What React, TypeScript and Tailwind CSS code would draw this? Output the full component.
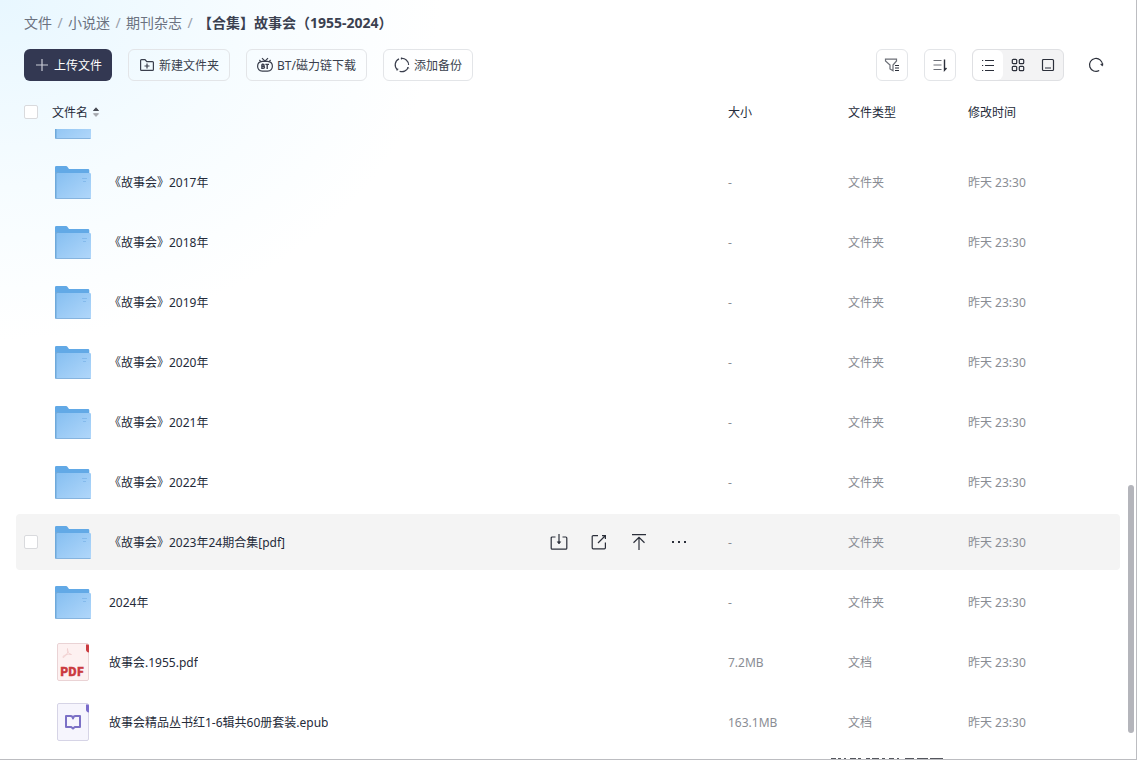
import type { ReactNode } from 'react';

type FileKind = 'folder' | 'pdf' | 'epub';

interface FileItem {
  name: string;
  kind: FileKind;
  size: string;
  type: string;
  time: string;
  active?: boolean;
}

const folder = (name: string, active = false): FileItem => ({
  name,
  kind: 'folder',
  size: '-',
  type: '文件夹',
  time: '昨天 23:30',
  active,
});

const files: FileItem[] = [
  folder('《故事会》2017年'),
  folder('《故事会》2018年'),
  folder('《故事会》2019年'),
  folder('《故事会》2020年'),
  folder('《故事会》2021年'),
  folder('《故事会》2022年'),
  folder('《故事会》2023年24期合集[pdf]', true),
  folder('2024年'),
  { name: '故事会.1955.pdf', kind: 'pdf', size: '7.2MB', type: '文档', time: '昨天 23:30' },
  {
    name: '故事会精品丛书红1-6辑共60册套装.epub',
    kind: 'epub',
    size: '163.1MB',
    type: '文档',
    time: '昨天 23:30',
  },
];

const rowGrid = 'grid grid-cols-[minmax(0,1fr)_120px_120px_152px] items-center';

function Icon({ children, size = 16 }: { children: ReactNode; size?: number }) {
  return (
    <svg
      width={size}
      height={size}
      viewBox={`0 0 ${size} ${size}`}
      fill="none"
      stroke="currentColor"
      strokeWidth="1.2"
      className="shrink-0"
      aria-hidden="true"
    >
      {children}
    </svg>
  );
}

function FolderIcon() {
  return (
    <svg width="36" height="34" viewBox="0 -1 36 34" className="shrink-0" aria-hidden="true">
      <defs>
        <linearGradient id="folderFront" x1="0" y1="0" x2="1" y2="1">
          <stop offset="0" stopColor="#86bff1" />
          <stop offset="1" stopColor="#b1d7fa" />
        </linearGradient>
      </defs>
      <path d="M0 1.2Q0 0 1.2 0H11Q12 0 12.6 1L14 3H33Q34.3 3 34.3 4.3V20H0Z" fill="#62a9e6" />
      <path d="M0 6H4V33H1.2Q0 33 0 32Z" fill="#6fa9da" />
      <path d="M1.5 8.2Q1.5 7 2.7 7H34.8Q36 7 36 8.2V31.8Q36 33 34.8 33H1.5Z" fill="url(#folderFront)" />
      <path d="M1 32.5H35.5" stroke="#86b4df" strokeWidth="1" />
      <path d="M27 12.5H32M28 15.5H31" stroke="#78b2e8" strokeWidth="0.7" />
    </svg>
  );
}

function PdfIcon() {
  return (
    <svg width="32" height="38" viewBox="0 0 32 38" aria-hidden="true">
      <rect x="0.5" y="0.5" width="31" height="37" rx="1.5" fill="#fdf1f1" stroke="#ead3d5" />
      <path d="M29 1.5H31Q32 1.5 32 2.5V9.5Q29 9 29 6.5Z" fill="#cb3b40" />
      <path
        d="M10.5 5.5Q12 9 9.5 11.5Q8 14 6 14.5Q5 13.5 8 12Q11 10.5 14.5 11.5Q13 11.5 11.3 9.5Q9.8 7.5 10.5 5.5Z"
        fill="none"
        stroke="#f1cfcf"
        strokeWidth="0.9"
      />
      <text
        x="15"
        y="33"
        textAnchor="middle"
        fontFamily="Noto Sans CJK SC, sans-serif"
        fontSize="12"
        fontWeight="900"
        fill="#cb3b40"
        stroke="#cb3b40"
        strokeWidth="0.3"
      >
        PDF
      </text>
    </svg>
  );
}

function EpubIcon() {
  return (
    <svg width="32" height="38" viewBox="0 0 32 38" fill="none" aria-hidden="true">
      <rect x="0.5" y="0.5" width="31" height="37" rx="1.5" fill="#f6f5fd" stroke="#d6d4e6" />
      <path d="M29 1.5H31Q32 1.5 32 2.5V9.5Q29 9 29 6.5Z" fill="#7a6ccb" />
      <path
        d="M9 13H13.5Q16 13 16 15.5Q16 13 18.5 13H23V24H17.8L16 25.6L14.2 24H9Z"
        stroke="#7b70c6"
        strokeWidth="2"
        strokeLinejoin="round"
      />
    </svg>
  );
}

const kindIcons: Record<FileKind, ReactNode> = {
  folder: <FolderIcon />,
  pdf: <PdfIcon />,
  epub: <EpubIcon />,
};

function Checkbox({ label }: { label: string }) {
  return (
    <input
      type="checkbox"
      aria-label={label}
      className="size-3.5 shrink-0 appearance-none rounded-xs border border-[#d9dadd] bg-white"
    />
  );
}

function ToolButton({ icon, children }: { icon: ReactNode; children: ReactNode }) {
  return (
    <button
      type="button"
      className="flex h-8 items-center gap-1 rounded-md border border-[#e3e5e8] px-2.5 text-[#3a3f4d]"
    >
      {icon}
      <span className="pt-0.5">{children}</span>
    </button>
  );
}

function Breadcrumb() {
  return (
    <nav aria-label="路径" className="flex h-5 items-center px-2 text-sm text-[#6b7280]">
      {['文件', '小说迷', '期刊杂志'].map((part) => (
        <span key={part} className="flex">
          <a href="#">{part}</a>
          <span className="w-4 text-center text-[#9aa0ab]">/</span>
        </span>
      ))}
      <span className="font-bold text-[#3b4150]">【合集】故事会（1955-2024）</span>
    </nav>
  );
}

function Toolbar() {
  return (
    <div className="mt-4 flex items-center gap-4 px-2">
      <button
        type="button"
        className="flex h-8 items-center gap-1 rounded-md bg-[#333852] px-2.5 text-white"
      >
        <Icon>
          <path d="M8 2V14M2 8H14" stroke="#c9cbd6" />
        </Icon>
        <span className="pt-0.5">上传文件</span>
      </button>
      <ToolButton
        icon={
          <Icon>
            <path d="M1.6 3.5Q1.6 2.6 2.5 2.6H6L7.8 4.6H13.5Q14.4 4.6 14.4 5.5V12.5Q14.4 13.4 13.5 13.4H2.5Q1.6 13.4 1.6 12.5Z" />
            <path d="M8 6.5V11.5M5.5 9H10.5" />
          </Icon>
        }
      >
        新建文件夹
      </ToolButton>
      <ToolButton
        icon={
          <Icon>
            <path d="M5.4 4.4H10.6Q15.4 4.8 15.4 9.2T10.6 14.2H5.4Q0.6 13.6 0.6 9.2T5.4 4.4Z" />
            <path d="M5 1.2L8 4.2L11 1.2M2.4 3L3.8 4.6M13.6 3L12.2 4.6" />
            <path
              d="M4.9 7.2V11.4H6.2Q7.5 11.4 7.5 10.3T6.2 9.2H5M6 9.2Q7.1 9.2 7.1 8.2T6 7.2H4.9M8.4 7.4H12M10.2 7.4V11.9"
              strokeWidth="1.4"
            />
          </Icon>
        }
      >
        BT/磁力链下载
      </ToolButton>
      <ToolButton
        icon={
          <Icon>
            <path d="M5 1.9A6.6 6.6 0 0 0 3.4 12.8M5.6 14.2A6.6 6.6 0 0 0 14.2 10.6M14.6 8A6.6 6.6 0 0 0 7 1.5" />
            <path d="M2.4 13L3.7 13L3.8 11.6M13.2 10.8L14.2 10.4L14.8 11.4M7.8 2.4L6.9 1.5L7.9 0.7" strokeWidth="1" />
          </Icon>
        }
      >
        添加备份
      </ToolButton>

      <div className="ml-auto flex items-center gap-4 text-[#2b2f3a]">
        <button
          type="button"
          aria-label="筛选"
          className="flex size-8 items-center justify-center rounded-md border border-[#e3e5e8] bg-white"
        >
          <Icon>
            <path d="M1.5 2.2H12.5V4L9 8V13.8L6 12V8L1.5 4Z" stroke="#6c6f77" />
            <path d="M11 8.5H15M11 11H15M11 13.5H15" />
          </Icon>
        </button>
        <button
          type="button"
          aria-label="排序"
          className="flex size-8 items-center justify-center rounded-md border border-[#e3e5e8] bg-white"
        >
          <Icon>
            <path d="M1.5 3.5H9.5M1.5 8H9.5M1.5 12.5H9.5" stroke="#6c6f77" />
            <path d="M12.5 2.5V13.2L14.5 11" strokeWidth="1.4" />
          </Icon>
        </button>
        <div className="flex h-8 overflow-hidden rounded-md border border-[#dfe0e3] bg-[#f3f3f4]">
          <button type="button" aria-label="列表" className="flex w-[30px] items-center justify-center rounded-md bg-white">
            <Icon>
              <path d="M5 3.5H14M5 8.5H14M5 13.5H14M2 3.5H3.2M2 8.5H3.2M2 13.5H3.2" />
            </Icon>
          </button>
          <button type="button" aria-label="网格" className="flex w-[30px] items-center justify-center">
            <Icon>
              <rect x="2.3" y="2.3" width="4.4" height="4.4" rx="1" />
              <rect x="9.3" y="2.3" width="4.4" height="4.4" rx="1" />
              <rect x="2.3" y="9.3" width="4.4" height="4.4" rx="1" />
              <rect x="9.3" y="9.3" width="4.4" height="4.4" rx="1" />
            </Icon>
          </button>
          <button type="button" aria-label="大图" className="flex w-[30px] items-center justify-center">
            <Icon>
              <rect x="2.5" y="2.5" width="11" height="11" rx="1" />
              <path d="M5 11H11" />
            </Icon>
          </button>
        </div>
        <button type="button" aria-label="刷新" className="flex size-8 items-center justify-center">
          <Icon>
            <path d="M11.2 13.6A6.5 6.5 0 1 1 14.5 8.2" />
            <path d="M12.6 7.4L14.5 9L15 6.6Z" fill="currentColor" strokeWidth="0.6" />
          </Icon>
        </button>
      </div>
    </div>
  );
}

function RowActions() {
  const button = 'flex size-6 items-center justify-center';
  return (
    <div className="mr-[37px] ml-auto flex gap-4 text-[#2b2f3a]">
      <button type="button" aria-label="下载" className={button}>
        <Icon size={18}>
          <path d="M5.5 4H2.2Q1.2 4 1.2 5V15.2Q1.2 16.2 2.2 16.2H15.8Q16.8 16.2 16.8 15.2V5Q16.8 4 15.8 4H12.5" />
          <path d="M9 1V10.5" />
          <path d="M7.4 8.8H10.6L9 10.8Z" fill="currentColor" strokeWidth="0.8" />
        </Icon>
      </button>
      <button type="button" aria-label="分享" className={button}>
        <Icon size={18}>
          <path d="M8 2.6H3.2Q2.2 2.6 2.2 3.6V14.8Q2.2 15.8 3.2 15.8H14.4Q15.4 15.8 15.4 14.8V9.5" />
          <path d="M8 10L15 3M12 2.6H15.4V6" />
        </Icon>
      </button>
      <button type="button" aria-label="置顶" className={button}>
        <Icon size={18}>
          <path d="M2 1.6H16M9 4.5V17M3.5 9.8L9 4.4L14.5 9.8" />
        </Icon>
      </button>
      <button type="button" aria-label="更多" className={button}>
        <Icon size={18}>
          <path d="M2 9H4M8 9H10M14 9H16" strokeWidth="2" />
        </Icon>
      </button>
    </div>
  );
}

function FileRow({ file }: { file: FileItem }) {
  return (
    <tr
      className={`${rowGrid} mb-1 h-14 rounded-sm text-[#8a8d94] ${file.active ? 'bg-[#f4f4f4]' : ''}`}
    >
      <td className="flex items-center pl-2">
        <span className="flex w-7 shrink-0">
          {file.active && <Checkbox label={file.name} />}
        </span>
        <span className="mr-[15px] flex w-[42px] shrink-0 justify-center">{kindIcons[file.kind]}</span>
        <span className="truncate pt-0.5 text-[#252b3a]">{file.name}</span>
        {file.active && <RowActions />}
      </td>
      <td className="pt-0.5">{file.size}</td>
      <td className="pt-0.5">{file.type}</td>
      <td className="pt-0.5">{file.time}</td>
    </tr>
  );
}

export default function App() {
  return (
    <main className="relative flex h-screen flex-col overflow-hidden border-r border-b border-[#bcbdc1] bg-white bg-[radial-gradient(ellipse_440px_340px_at_0_0,#e8f7ff_0%,#f6fcff_55%,#ffffff_100%)] px-4 pt-[13px] font-['Noto_Sans','Noto_Sans_CJK_SC',sans-serif] text-xs">
      <Breadcrumb />
      <Toolbar />
      <table className="mt-4 flex min-h-0 flex-1 flex-col text-left">
        <thead className="mb-0.5 block shrink-0 text-[#252b3a]">
          <tr className={`${rowGrid} h-[30px]`}>
            <th className="flex items-center pl-2 font-normal">
              <span className="flex w-7">
                <Checkbox label="全选" />
              </span>
              <button type="button" className="flex items-center gap-1">
                <span className="pt-0.5">文件名</span>
                <svg width="8" height="12" viewBox="0 0 8 12" aria-hidden="true">
                  <path d="M1.5 4.5L4 1.8L6.5 4.5Z" fill="#4b4e57" stroke="#4b4e57" strokeLinejoin="round" />
                  <path d="M1.5 7.7L4 10.4L6.5 7.7Z" fill="#a6a8ae" stroke="#a6a8ae" strokeLinejoin="round" />
                </svg>
              </button>
            </th>
            <th className="pt-0.5 font-normal">大小</th>
            <th className="pt-0.5 font-normal">文件类型</th>
            <th className="pt-0.5 font-normal">修改时间</th>
          </tr>
        </thead>
        <tbody className="block min-h-0 flex-1 overflow-hidden">
          {/* Row scrolled under the header: only the folder's lower edge shows */}
          <tr className="mb-[15px] block">
            <td className="flex h-2.5 items-end overflow-hidden pl-[39px]">
              <FolderIcon />
            </td>
          </tr>
          {files.map((file) => (
            <FileRow key={file.name} file={file} />
          ))}
        </tbody>
      </table>
      {/* Scroll thumb over the right edge */}
      <div className="absolute right-0.5 bottom-[26px] h-[248px] w-1.5 rounded-full bg-[#b4b5bb]" />
      {/* Edge of the tip that waits below the window */}
      <svg className="absolute right-[193px] bottom-0 h-px w-[112px]" viewBox="0 0 112 1" aria-hidden="true">
        <path
          d="M0 0.5H112"
          stroke="#55575e"
          strokeDasharray="5 2 3 3 2 4 6 2 3 5 4 2 7 3 3 4 5 3 2 6 9 3 11 2 15 50"
        />
      </svg>
    </main>
  );
}
